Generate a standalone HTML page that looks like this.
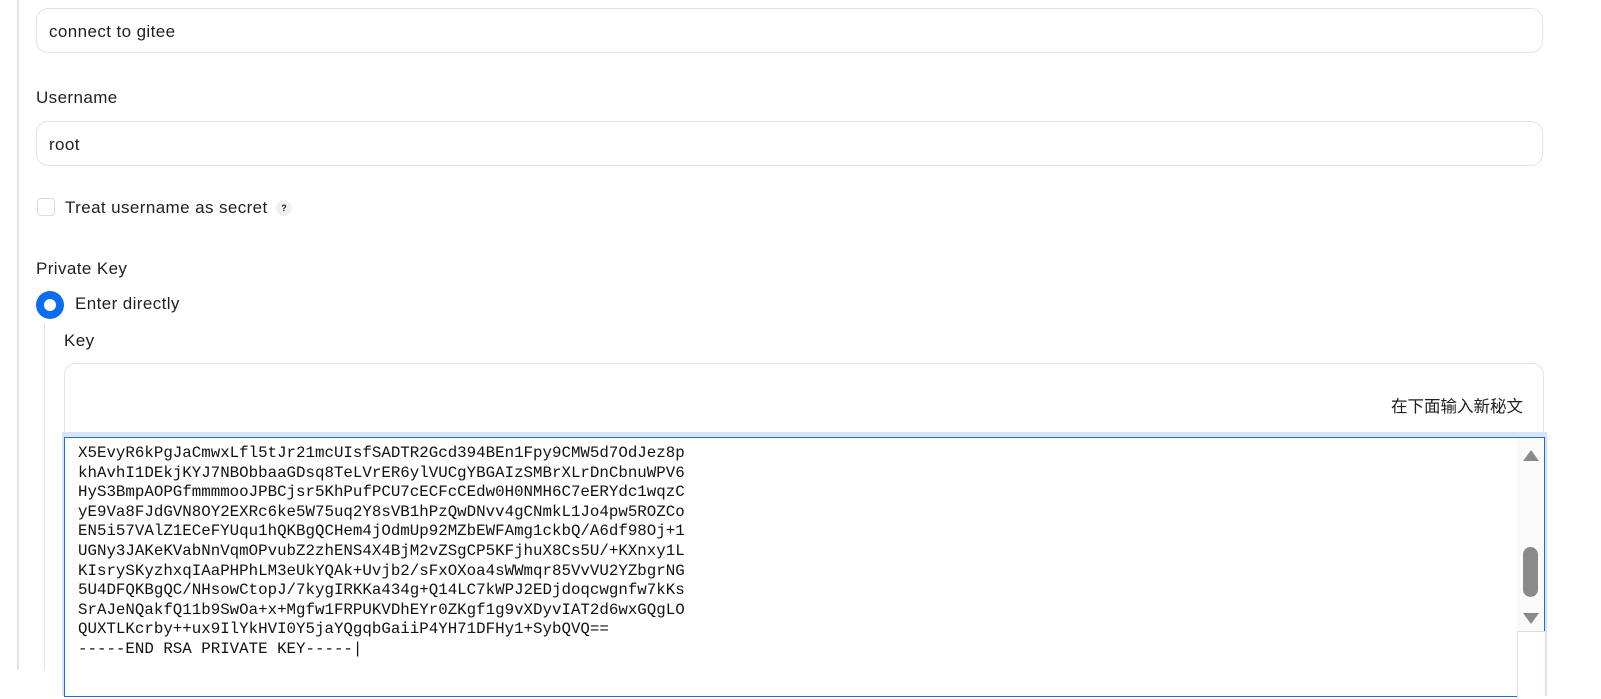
<!DOCTYPE html>
<html><head><meta charset="utf-8"><style>
body{margin:0;width:1601px;height:670px;overflow:hidden;background:#fff;font-family:"Liberation Sans","Noto Sans CJK SC",sans-serif;color:#1f1f1f;position:relative}
.vl{position:absolute;left:17px;top:0;width:2px;height:670px;background:#dfe3ec}
.inp{position:absolute;left:36px;width:1507px;height:45px;border:1px solid #dfe3ec;border-radius:12px;background:#fff;box-sizing:border-box;font-size:17px;letter-spacing:0.4px;line-height:45px;padding-left:12px}
.lbl{position:absolute;font-size:17px;letter-spacing:0.4px}
.cb{position:absolute;left:37px;top:198px;width:18px;height:18px;border:1px solid #d5dae3;border-radius:4px;box-sizing:border-box}
.q{position:absolute;left:276px;top:200px;width:16px;height:16px;border-radius:50%;background:#eef0f3;font-size:9px;font-weight:bold;text-align:center;line-height:16px}
.radio{position:absolute;left:36px;top:291px;width:28px;height:28px;border-radius:50%;background:#0b6cf0}
.radio:after{content:"";position:absolute;left:8px;top:8px;width:12px;height:12px;border-radius:50%;background:#fff}
.il{position:absolute;left:44px;top:323px;width:1px;height:347px;background:#dfe3ec}
.box{position:absolute;left:64px;top:363px;width:1480px;height:320px;border:1px solid #dfe3ec;border-radius:12px;box-sizing:border-box}
.ta{position:absolute;left:64px;top:437px;width:1481px;height:260px;border:1px solid #1a6ee0;box-shadow:0 -3px 0 2px #d6e5fb;background:#fff;box-sizing:border-box}
pre{margin:0;position:absolute;left:13px;top:6px;font-family:"Liberation Mono",monospace;font-size:15.8px;line-height:19.6px;color:#111}
.sb{position:absolute;right:0;top:0;width:27px;height:260px;background:#fafafa}
</style></head><body>
<div class="vl"></div>
<div class="inp" style="top:8px">connect to gitee</div>
<div class="lbl" style="left:36px;top:88px">Username</div>
<div class="inp" style="top:121px">root</div>
<div class="cb"></div>
<div class="lbl" style="left:65px;top:198px">Treat username as secret</div>
<div class="q">?</div>
<div class="lbl" style="left:36px;top:259px">Private Key</div>
<div class="radio"></div>
<div class="lbl" style="left:75px;top:294px">Enter directly</div>
<div class="il"></div>
<div class="lbl" style="left:64px;top:331px">Key</div>
<div class="box"></div>
<div class="lbl" style="left:1391px;top:393px;letter-spacing:0;font-size:16.5px">在下面输入新秘文</div>
<div class="ta">
<pre>X5EvyR6kPgJaCmwxLfl5tJr21mcUIsfSADTR2Gcd394BEn1Fpy9CMW5d7OdJez8p
khAvhI1DEkjKYJ7NBObbaaGDsq8TeLVrER6ylVUCgYBGAIzSMBrXLrDnCbnuWPV6
HyS3BmpAOPGfmmmmooJPBCjsr5KhPufPCU7cECFcCEdw0H0NMH6C7eERYdc1wqzC
yE9Va8FJdGVN8OY2EXRc6ke5W75uq2Y8sVB1hPzQwDNvv4gCNmkL1Jo4pw5ROZCo
EN5i57VAlZ1ECeFYUqu1hQKBgQCHem4jOdmUp92MZbEWFAmg1ckbQ/A6df98Oj+1
UGNy3JAKeKVabNnVqmOPvubZ2zhENS4X4BjM2vZSgCP5KFjhuX8Cs5U/+KXnxy1L
KIsrySKyzhxqIAaPHPhLM3eUkYQAk+Uvjb2/sFxOXoa4sWWmqr85VvVU2YZbgrNG
5U4DFQKBgQC/NHsowCtopJ/7kygIRKKa434g+Q14LC7kWPJ2EDjdoqcwgnfw7kKs
SrAJeNQakfQ11b9SwOa+x+Mgfw1FRPUKVDhEYr0ZKgf1g9vXDyvIAT2d6wxGQgLO
QUXTLKcrby++ux9IlYkHVI0Y5jaYQgqbGaiiP4YH71DFHy1+SybQVQ==
-----END RSA PRIVATE KEY-----|</pre>
<div class="sb">
<div style="position:absolute;left:6px;top:12px;width:0;height:0;border-left:8px solid transparent;border-right:8px solid transparent;border-bottom:11px solid #8a8a8a"></div>
<div style="position:absolute;left:6px;top:109px;width:15px;height:50px;border-radius:8px;background:#8a8a8a"></div>
<div style="position:absolute;left:6px;top:175px;width:0;height:0;border-left:8px solid transparent;border-right:8px solid transparent;border-top:11px solid #8a8a8a"></div>
<div style="position:absolute;left:0;top:193px;width:27px;height:67px;border-top:1px solid #ddd;border-left:1px solid #ddd;background:#fff"></div>
</div>
</div>
</body></html>
